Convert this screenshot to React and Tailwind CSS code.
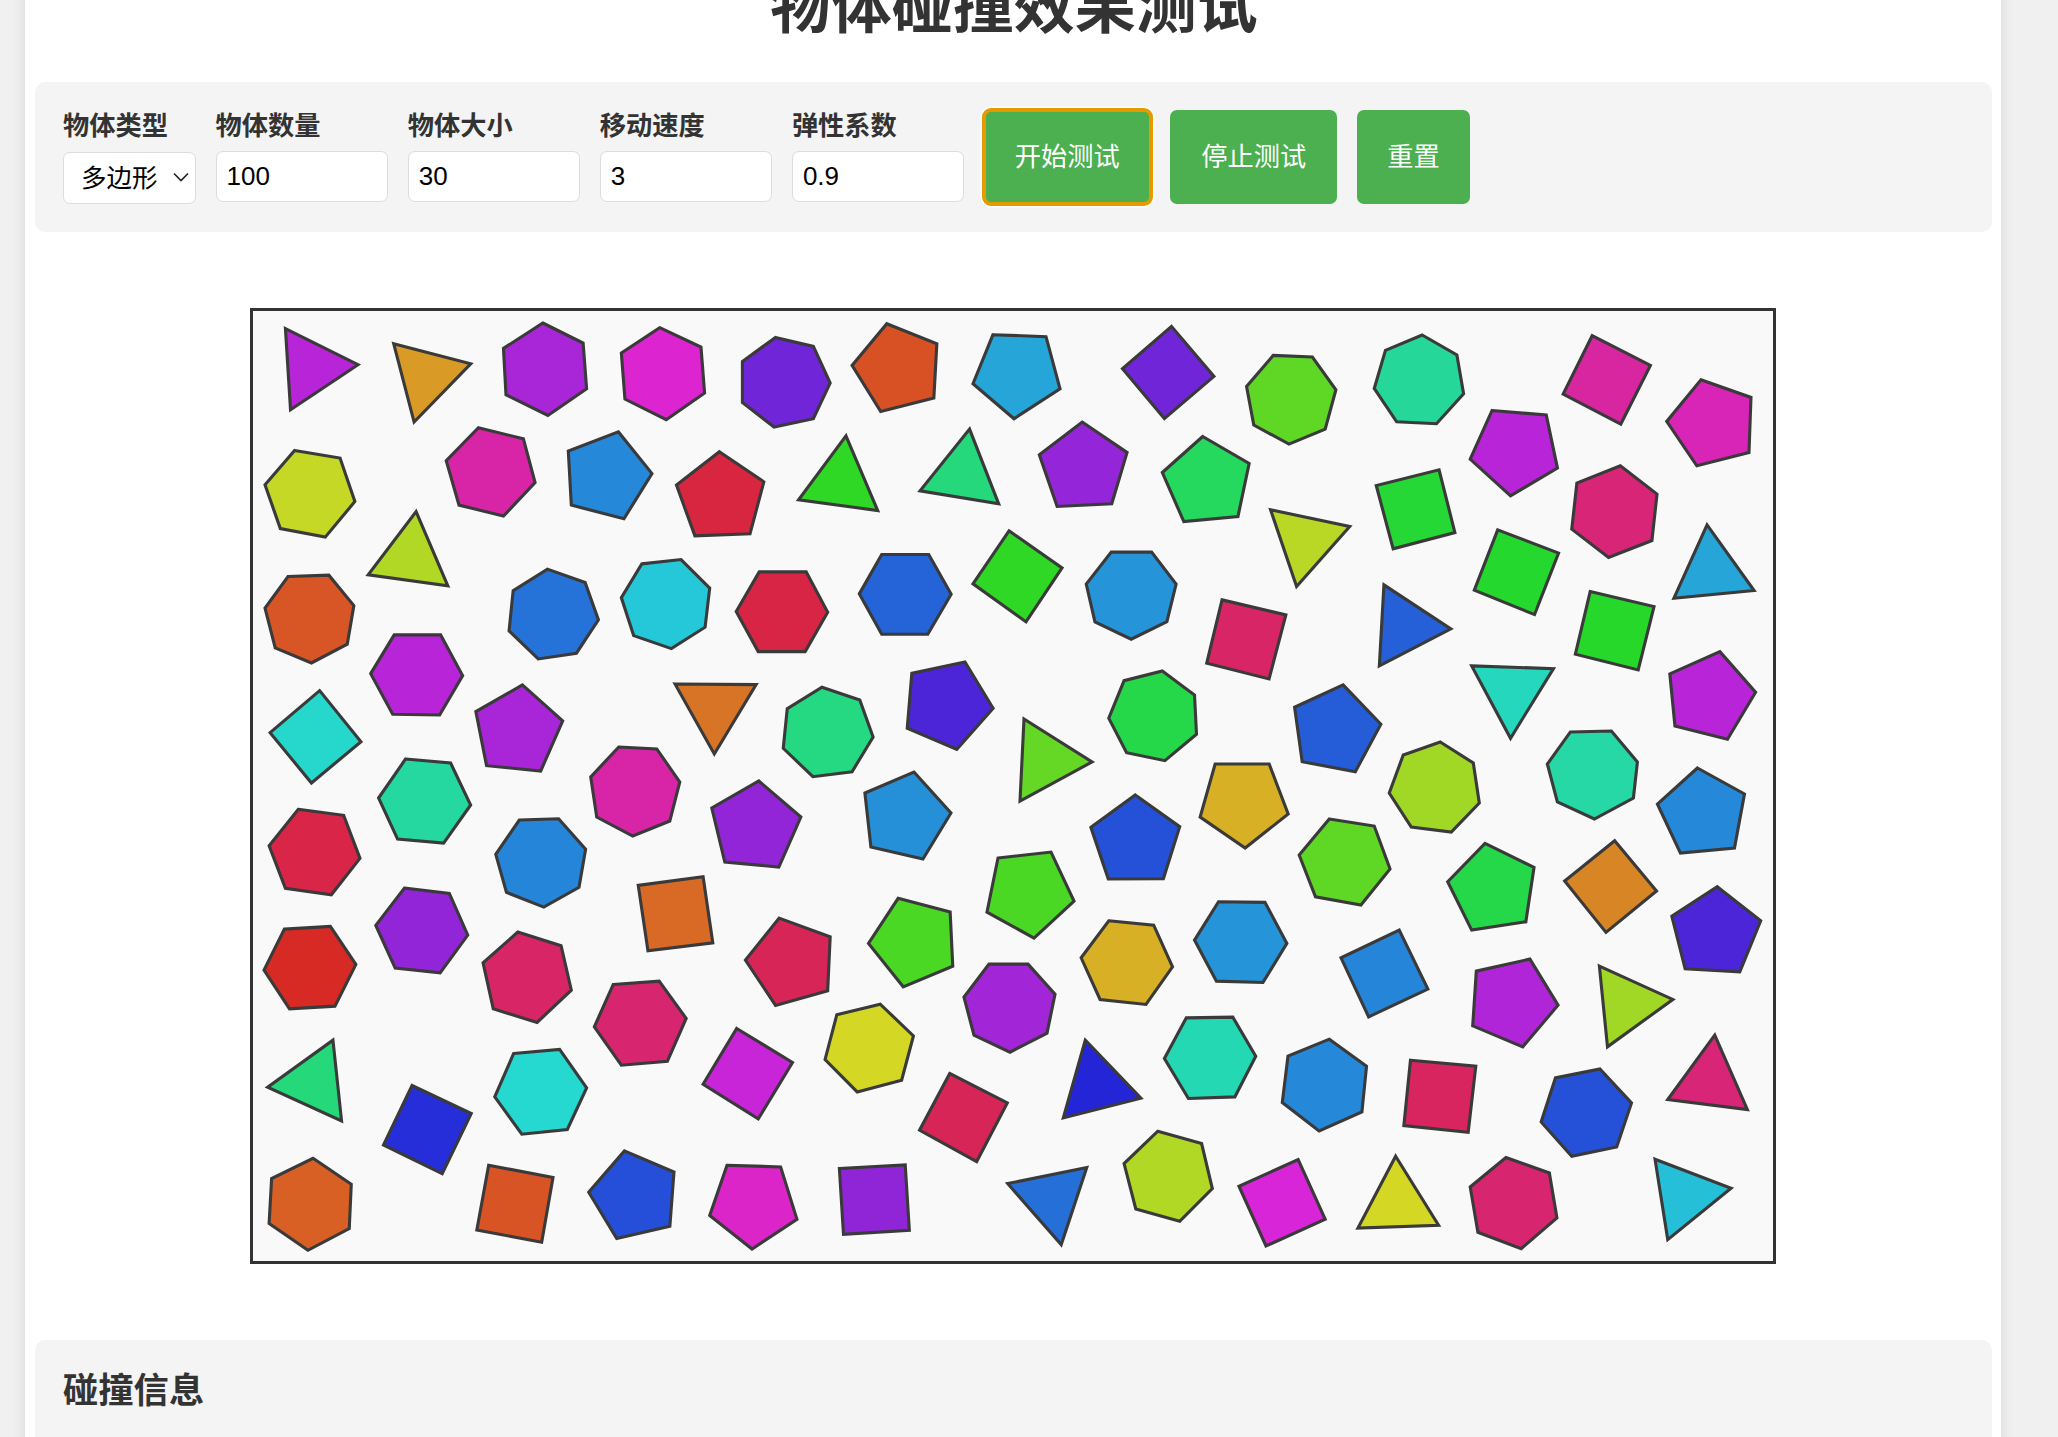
const crop = (x0, y0, list) =>
  list.map(([c, pts]) => ({
    c,
    pts: pts
      .trim()
      .split(/\s+/)
      .map((p) => {
        const [x, y] = p.split(",").map(Number);
        return `${(x0 + x / 1.96).toFixed(1)},${(y0 + y / 3).toFixed(1)}`;
      })
      .join(" "),
  }));

const plain = (list) => list.map(([c, pts]) => ({ c, pts }));

const shapes = [
  ...crop(240, 300, [
    ["#b824d8", "90,87 232,195 100,330"],
    ["#d99a26", "302,132 453,192 342,367"],
    ["#a925d8", "594,70 673,130 680,267 604,347 522,285 517,146"],
    ["#dc25d0", "823,84 904,142 911,280 836,360 755,298 748,160"],
    ["#7125d8", "1050,113 1124,140 1157,250 1124,357 1047,382 985,308 985,185"],
    ["#d85125", "1268,72 1366,132 1360,295 1256,335 1200,197"],
    ["#c4d825", "108,452 197,475 226,605 168,712 80,686 50,555"],
    ["#d825a8", "468,384 556,417 579,548 517,649 430,616 405,483"],
    ["#2588d8", "742,396 808,521 753,657 650,616 644,454"],
    ["#d82540", "940,456 1027,546 1000,702 892,708 856,556"],
    ["#2ed825", "1188,408 1250,632 1095,600"],
    ["#25d87c", "1430,388 1487,612 1333,573"],
    ["#b0d825", "346,635 408,858 252,825"],
    ["#d85525", "95,830 175,826 224,917 211,1033 141,1089 70,1044 50,925"],
    ["#2573d8", "603,808 677,848 703,960 660,1060 585,1077 528,993 536,872"],
    ["#25c8d8", "788,792 865,779 921,865 912,982 846,1046 772,1007 748,893"],
    ["#d82545", "1018,816 1110,816 1152,937 1108,1055 1016,1055 973,935"],
    ["#2563d8", "1258,764 1350,764 1394,883 1348,1003 1258,1003 1214,882"],
    ["#b824d8", "303,1005 394,1005 437,1127 392,1245 300,1243 257,1121"],
    ["#a925d8", "554,1155 633,1263 590,1413 484,1397 463,1235"],
    ["#d87425", "853,1152 1012,1154 930,1362"],
    ["#25d882", "1141,1162 1215,1200 1241,1311 1200,1415 1123,1430 1065,1345 1073,1226"],
    ["#4d25d8", "1317,1120 1421,1086 1476,1225 1405,1348 1308,1285"],
    ["#25d8cb", "157,1172 238,1325 141,1449 60,1298"],
  ]),
  ...crop(1000, 300, [
    ["#7125d8", "336,80 419,230 322,356 240,207"],
    ["#5fd825", "535,167 612,172 658,270 637,388 566,433 497,376 483,260"],
    ["#25d89a", "827,106 895,166 908,282 855,372 777,366 733,266 755,152"],
    ["#d825a0", "1160,108 1274,197 1216,373 1103,283"],
    ["#d825b8", "1373,240 1471,293 1467,458 1365,498 1306,365"],
    ["#b824d8", "964,332 1070,346 1092,505 1000,588 921,478"],
    ["#9425d8", "161,367 249,458 219,612 112,620 77,465"],
    ["#25d85e", "397,410 488,491 466,650 360,665 318,518"],
    ["#25d835", "860,510 891,698 770,747 737,557"],
    ["#b8d825", "530,630 685,680 581,860"],
    ["#d82578", "1215,498 1287,583 1277,722 1192,773 1120,688 1130,550"],
    ["#25d82e", "975,690 1094,760 1047,944 929,871"],
    ["#25a5d8", "1385,675 1477,872 1320,895"],
    ["#2594d8", "218,757 297,757 345,853 327,965 257,1018 186,966 169,853"],
    ["#d82565", "435,900 560,945 527,1137 405,1090"],
    ["#2560d8", "752,855 883,987 743,1098"],
    ["#25d82a", "1156,875 1281,920 1250,1110 1127,1063"],
    ["#25d8bd", "924,1098 1084,1106 1000,1315"],
    ["#b824d8", "1410,1055 1480,1177 1425,1318 1322,1278 1312,1122"],
    ["#25d84a", "318,1113 381,1185 385,1303 323,1382 248,1358 213,1255 243,1142"],
    ["#255cd8", "672,1155 746,1273 696,1415 592,1385 577,1222"],
  ]),
  ...plain([
    ["#25a5d8", "993,335 1046,337 1060,389 1014,419 973,384"],
    ["#2ed825", "1009,531 1062,568 1026,622 973,584"],
    ["#65d825", "1024,719 1092,762 1020,801"],
    ["#d8b025", "1215,764 1269,764 1288,814 1245,848 1200,817"],
    ["#a0d825", "1440,742 1473,763 1479,803 1451,832 1411,827 1389,793 1403,755"],
    ["#25d8a5", "1570,732 1611,731 1637,762 1633,798 1594,819 1557,802 1547,764"],
    ["#2588d8", "1697,768 1744,794 1734,848 1680,853 1657,804"],
    ["#25d8a0", "406,759 451,763 471,805 444,843 398,839 379,798"],
    ["#d825a8", "619,747 657,749 680,782 670,821 633,836 597,817 591,777"],
    ["#9225d8", "759,781 801,817 779,867 725,862 712,808"],
    ["#2590d8", "914,772 951,813 923,859 871,847 865,793"],
    ["#a225d8", "989,964 1028,964 1055,994 1047,1033 1010,1052 974,1035 964,997"],
    ["#4ad825", "998,858 1051,852 1074,901 1034,938 987,912"],
  ]),
  ...crop(240, 780, [
    ["#d82548", "115,88 204,106 236,235 180,344 90,325 58,197"],
    ["#2585d8", "548,120 625,116 678,208 665,322 596,381 523,337 502,223"],
    ["#d86a25", "781,316 908,290 927,488 800,512"],
    ["#d82558", "1057,414 1157,470 1152,632 1050,676 991,540"],
    ["#4ad825", "1290,355 1392,396 1397,558 1300,620 1232,490"],
    ["#9225d8", "323,324 411,340 447,465 393,578 305,564 267,436"],
    ["#d82a25", "88,447 178,439 228,553 187,678 98,686 48,570"],
    ["#d82565", "545,456 630,497 650,630 583,727 497,686 477,548"],
    ["#d82570", "732,613 822,603 875,715 838,843 748,855 695,740"],
    ["#d4d825", "1170,704 1255,672 1320,767 1297,900 1210,935 1147,838"],
    ["#25d87a", "183,780 200,1022 55,921"],
    ["#252ed8", "338,916 454,1000 397,1180 282,1094"],
    ["#25d8d0", "537,820 627,808 680,923 642,1048 553,1062 500,950"],
    ["#c825d8", "974,745 1083,847 1016,1016 908,912"],
    ["#d82558", "1391,880 1504,968 1444,1144 1332,1050"],
    ["#d86025", "144,1134 219,1212 215,1345 134,1410 58,1330 63,1195"],
    ["#d85425", "488,1155 614,1192 592,1386 465,1349"],
    ["#254fd8", "754,1112 851,1175 843,1338 739,1375 684,1236"],
    ["#dc25c8", "955,1155 1060,1160 1092,1317 1004,1406 921,1306"],
    ["#9025d8", "1175,1165 1304,1154 1312,1350 1183,1362"],
  ]),
  ...crop(1000, 780, [
    ["#2550d8", "265,45 352,140 320,296 212,297 178,142"],
    ["#5fd825", "645,117 733,138 764,267 707,375 618,350 586,225"],
    ["#25d84a", "950,190 1046,262 1030,425 924,450 877,305"],
    ["#d88525", "1204,182 1286,333 1187,457 1106,303"],
    ["#4d25d8", "1405,320 1490,422 1449,575 1342,566 1316,408"],
    ["#d8b025", "213,422 301,435 338,560 286,673 196,658 159,533"],
    ["#2594d8", "428,365 519,367 562,490 515,607 424,603 381,480"],
    ["#2585d8", "782,450 838,627 722,710 668,533"],
    ["#b025d8", "1038,537 1093,675 1024,800 926,737 933,573"],
    ["#a0d825", "1174,558 1318,658 1190,800"],
    ["#d82578", "1400,765 1464,988 1308,958"],
    ["#2525d8", "167,780 276,954 124,1013"],
    ["#25d8b4", "365,713 456,711 501,828 460,950 369,955 322,835"],
    ["#2588d8", "645,777 718,858 709,995 625,1052 553,967 564,828"],
    ["#d82560", "804,840 932,858 917,1056 791,1036"],
    ["#2550d8", "1088,893 1175,866 1237,968 1208,1100 1120,1128 1060,1025"],
    ["#2570d8", "15,1210 170,1162 120,1393"],
    ["#b0d825", "309,1053 395,1090 416,1225 352,1323 266,1286 243,1150"],
    ["#d825d8", "584,1138 637,1317 521,1397 468,1218"],
    ["#d4d825", "775,1128 859,1335 701,1343"],
    ["#d82570", "991,1132 1076,1178 1091,1313 1021,1405 936,1356 921,1220"],
    ["#25c0d8", "1283,1137 1432,1224 1308,1378"],
  ]),
];

const fields = [
  { label: "物体数量", value: "100" },
  { label: "物体大小", value: "30" },
  { label: "移动速度", value: "3" },
  { label: "弹性系数", value: "0.9" },
];

const App = () => {
  return (
    <div className="h-[1437px] overflow-hidden bg-[#f0f0f0] text-[#333] font-['Liberation_Sans','Noto_Sans_CJK_SC',sans-serif]">
      <div className="ml-[25px] -mt-[23px] h-[1500px] w-[1976px] bg-white pl-[10px] pr-[8.6px] shadow-[0_0_13px_rgba(0,0,0,0.1)]">
        <h1 className="mb-[45px] h-[60px] text-center text-[61px] font-bold leading-[60px]">
          物体碰撞效果测试
        </h1>

        <div className="flex h-[150px] gap-[19.6px] rounded-[10px] bg-[#f4f4f4] px-[28px] py-[28px]">
          <div className="flex w-[133px] flex-col">
            <label className="h-[42px] pt-[1px] text-[26.25px] font-bold leading-[30px]">物体类型</label>
            <div className="relative">
              <select
                defaultValue="多边形"
                className="h-[52px] w-full appearance-none rounded-[7px] border border-[#ddd] bg-white pl-[17px] text-[25.5px] text-black"
              >
                <option>多边形</option>
                <option>圆形</option>
              </select>
              <svg
                className="absolute left-[109px] top-[20px] h-[10px] w-[18px]"
                viewBox="0 0 18 10"
                fill="none"
                stroke="#222"
                strokeWidth="1.6"
              >
                <path d="M2 1.5 L9 8.5 L16 1.5" />
              </svg>
            </div>
          </div>

          {fields.map((f) => (
            <div key={f.label} className="flex w-[172.5px] flex-col">
              <label className="h-[41px] pt-[1px] text-[26.25px] font-bold leading-[30px]">{f.label}</label>
              <input
                type="text"
                defaultValue={f.value}
                className="h-[51px] w-full rounded-[7px] border border-[#ddd] bg-white px-[10px] text-[26px] text-black"
              />
            </div>
          ))}

          <button className="w-[166.8px] rounded-[7px] bg-[#4caf50] pt-[1px] text-[26.25px] text-white shadow-[0_0_0_3.5px_white] outline-[4.2px] outline-offset-[-2px] outline-[#e59b00] outline-solid">
            开始测试
          </button>
          <button className="w-[166.8px] rounded-[7px] bg-[#4caf50] pt-[1px] text-[26.25px] text-white">
            停止测试
          </button>
          <button className="w-[113.5px] rounded-[7px] bg-[#4caf50] pt-[1px] text-[26.25px] text-white">
            重置
          </button>
        </div>

        <div className="mt-[76px] mb-[76px] flex justify-center pr-[1.4px]">
          <div className="h-[956px] w-[1526px] border-[3.5px] border-[#333] bg-[#f9f9f9]">
            <svg className="block h-full w-full" viewBox="253.5 311.5 1519 949">
              {shapes.map((s, i) => (
                <polygon key={i} points={s.pts} fill={s.c} stroke="#3a3a3a" strokeWidth="3.1" />
              ))}
            </svg>
          </div>
        </div>

        <div className="h-[300px] rounded-[10px] bg-[#f4f4f4] px-[28px] pt-[31px]">
          <h3 className="text-[35.3px] font-bold leading-[40px]">碰撞信息</h3>
        </div>
      </div>
    </div>
  );
};

export default App;
